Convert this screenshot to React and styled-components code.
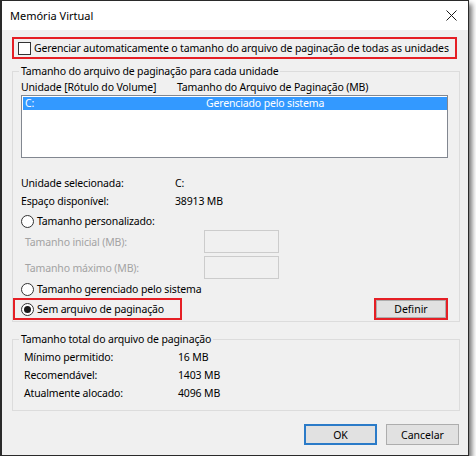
import React from 'react';
import styled, { createGlobalStyle } from 'styled-components';

const Global = createGlobalStyle`
  html, body { margin: 0; padding: 0; background: #ffffff; }
  body {
    font-family: "Noto Sans", "Open Sans", sans-serif;
    font-size: 10.5px;
    letter-spacing: -0.15px;
    color: #000;
    white-space: nowrap;
  }
  * { box-sizing: border-box; }
`;

const Window = styled.div`
  width: 469px;
  height: 456px;
  border: 1px solid #2a2a2a;
  border-left-width: 2px;
  background: #f0f0f0;
  box-shadow: 3px 4px 5px rgba(0, 0, 0, 0.55);
  display: flex;
  flex-direction: column;
`;

const TitleBar = styled.div`
  height: 29px;
  background: #ffffff;
  display: flex;
  align-items: center;
  justify-content: space-between;
  padding: 0 10px 0 8px;
  flex: none;
`;

const Title = styled.span`
  font-size: 11px;
  letter-spacing: 0;
  line-height: 16px;
`;

const CloseIcon = styled.svg`
  width: 11px;
  height: 11px;
  margin-right: 1px;
`;

const Body = styled.div`
  flex: 1;
  display: flex;
  flex-direction: column;
  padding: 0 8px 0 10px;
`;

const Highlight = styled.div`
  height: 22px;
  border: 2px solid #e51f25;
  display: flex;
  align-items: center;
`;

const AutoRow = styled(Highlight)`
  margin-top: 7px;
  margin-right: 3px;
  padding-left: 4px;
  gap: 3px;
`;

const CheckBox = styled.span`
  width: 13px;
  height: 13px;
  border: 1px solid #333333;
  background: #ffffff;
  flex: none;
`;

const Group = styled.fieldset`
  margin: ${p => p.$top}px 0 0 0;
  padding: ${p => p.$padTop || 0}px 8px ${p => p.$bottom}px 8px;
  border: 1px solid #dcdcdc;
  min-width: 0;
`;

const Legend = styled.legend`
  padding: 0 2px;
  margin-left: -2px;
  line-height: 16px;
`;

const HeaderRow = styled.div`
  display: grid;
  grid-template-columns: 156px 1fr;
  line-height: 16px;
  height: 16px;
`;

const ListBox = styled.div`
  height: 63px;
  width: 427px;
  border: 1px solid #828790;
  background: #ffffff;
  padding: 1px 0 0 1px;
`;

const ListRow = styled.div`
  display: grid;
  grid-template-columns: 181px 1fr;
  height: 13px;
  width: 424px;
  line-height: 13px;
  background: ${p => (p.$selected ? '#3399ff' : 'transparent')};
  color: ${p => (p.$selected ? '#ffffff' : '#000000')};
  padding-left: 2px;
`;

const InfoRow = styled.div`
  display: grid;
  grid-template-columns: 154px 1fr;
  height: 18px;
  line-height: 18px;
  margin-top: ${p => p.$top || 0}px;
  padding-left: ${p => p.$indent || 0}px;
`;

const RadioRow = styled.div`
  display: flex;
  align-items: center;
  gap: 3px;
  height: 18px;
  margin-top: ${p => p.$top || 0}px;
`;

const Radio = styled.span`
  width: 13px;
  height: 13px;
  border-radius: 50%;
  border: 1px solid #333333;
  background: #ffffff;
  flex: none;
  display: flex;
  align-items: center;
  justify-content: center;
  &::after {
    content: '';
    width: 7px;
    height: 7px;
    border-radius: 50%;
    background: ${p => (p.$checked ? '#1a1a1a' : 'transparent')};
  }
`;

const FieldRow = styled.div`
  display: grid;
  grid-template-columns: 179px 75px;
  align-items: center;
  height: 23px;
  margin-top: ${p => p.$top || 0}px;
  padding-left: 4px;
  color: #a3a3a3;
`;

const DisabledInput = styled.div`
  height: 23px;
  border: 1px solid #cccccc;
  background: #f0f0f0;
`;

const ActionRow = styled.div`
  display: flex;
  justify-content: space-between;
  align-items: center;
`;

const NoPageRow = styled(Highlight)`
  width: 169px;
  margin-left: -8px;
  padding-left: 6px;
  gap: 3px;
`;

const DefineWrap = styled(Highlight)`
  width: 74px;
  margin-right: 3px;
`;

const Button = styled.button`
  font: inherit;
  color: #000;
  width: 73px;
  height: 21px;
  background: #e1e1e1;
  border: ${p => (p.$default ? '2px solid #2b7bc8' : '1px solid #adadad')};
  padding: 0;
  line-height: 16px;
`;

const FlatButton = styled(Button)`
  width: 100%;
  height: 100%;
  border: 1px solid #adadad;
`;

const Footer = styled.div`
  display: flex;
  justify-content: flex-end;
  gap: 9px;
  margin-top: 13px;
  padding-right: 1px;
`;

export default function App() {
  return (
    <>
      <Global />
      <Window>
        <TitleBar>
          <Title>Memória Virtual</Title>
          <CloseIcon viewBox="0 0 11 11">
            <path d="M0.5 0.5 L10.5 10.5 M10.5 0.5 L0.5 10.5" stroke="#1a1a1a" strokeWidth="1" fill="none" />
          </CloseIcon>
        </TitleBar>
        <Body>
          <AutoRow>
            <CheckBox />
            <span>Gerenciar automaticamente o tamanho do arquivo de paginação de todas as unidades</span>
          </AutoRow>

          <Group $top={4} $bottom={1}>
            <Legend>Tamanho do arquivo de paginação para cada unidade</Legend>
            <HeaderRow>
              <span>Unidade [Rótulo do Volume]</span>
              <span>Tamanho do Arquivo de Paginação (MB)</span>
            </HeaderRow>
            <ListBox>
              <ListRow $selected>
                <span>C:</span>
                <span>Gerenciado pelo sistema</span>
              </ListRow>
            </ListBox>

            <InfoRow $top={16}>
              <span>Unidade selecionada:</span>
              <span>C:</span>
            </InfoRow>
            <InfoRow>
              <span>Espaço disponível:</span>
              <span>38913 MB</span>
            </InfoRow>

            <RadioRow $top={2}>
              <Radio />
              <span>Tamanho personalizado:</span>
            </RadioRow>
            <FieldRow>
              <span>Tamanho inicial (MB):</span>
              <DisabledInput />
            </FieldRow>
            <FieldRow $top={3}>
              <span>Tamanho máximo (MB):</span>
              <DisabledInput />
            </FieldRow>
            <RadioRow $top={1}>
              <Radio />
              <span>Tamanho gerenciado pelo sistema</span>
            </RadioRow>

            <ActionRow>
              <NoPageRow>
                <Radio $checked />
                <span>Sem arquivo de paginação</span>
              </NoPageRow>
              <DefineWrap>
                <FlatButton>Definir</FlatButton>
              </DefineWrap>
            </ActionRow>
          </Group>

          <Group $top={9} $padTop={1} $bottom={8}>
            <Legend>Tamanho total do arquivo de paginação</Legend>
            <InfoRow $indent={3}>
              <span>Mínimo permitido:</span>
              <span>16 MB</span>
            </InfoRow>
            <InfoRow $indent={3}>
              <span>Recomendável:</span>
              <span>1403 MB</span>
            </InfoRow>
            <InfoRow $indent={3}>
              <span>Atualmente alocado:</span>
              <span>4096 MB</span>
            </InfoRow>
          </Group>

          <Footer>
            <Button $default>OK</Button>
            <Button>Cancelar</Button>
          </Footer>
        </Body>
      </Window>
    </>
  );
}
